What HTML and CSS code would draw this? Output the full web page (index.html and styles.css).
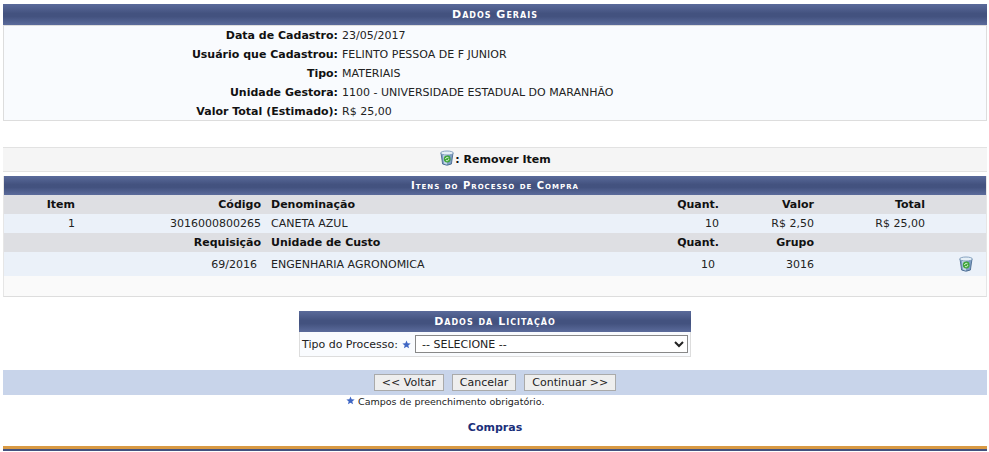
FILE: index.html
```html
<!DOCTYPE html>
<html lang="pt-BR">
<head>
  <meta charset="UTF-8">
  <title>Dados da Licitação</title>
  <link rel="stylesheet" href="styles.css">
</head>
<body>

<svg class="sprites" width="0" height="0">
  <symbol id="lixeira" viewBox="0 0 16 16">
    <path d="M2 3 L3.6 14 Q8 16.4 12.4 14 L14 3 Z" fill="#7f9fc4" stroke="#3d5f86" stroke-width="0.8"/>
    <path d="M4 5 L5 13.6 Q6.5 14.6 8 14.6 L8 5 Z" fill="#c5d8ea"/>
    <ellipse cx="8" cy="3" rx="6.4" ry="2" fill="#e6f0f7" stroke="#6f8fb3" stroke-width="0.8"/>
    <circle cx="8.2" cy="9" r="3.4" fill="#3fa63a"/>
    <path d="M6.6 9 A1.7 1.7 0 0 1 9.6 8 M9.8 9.2 A1.7 1.7 0 0 1 6.9 10.2" fill="none" stroke="#e8f8e0" stroke-width="1"/>
  </symbol>
  <symbol id="estrela" viewBox="0 0 10 10">
    <path d="M5 .5 L6.3 3.6 L9.6 3.8 L7 6 L7.9 9.3 L5 7.5 L2.1 9.3 L3 6 L.4 3.8 L3.7 3.6 Z" fill="#3f66c4"/>
  </symbol>
</svg>

<div class="pagina">

  <table class="formulario dados-gerais">
    <caption>Dados Gerais</caption>
    <tbody>
      <tr><th>Data de Cadastro:</th><td>23/05/2017</td></tr>
      <tr><th>Usuário que Cadastrou:</th><td>FELINTO PESSOA DE F JUNIOR</td></tr>
      <tr><th>Tipo:</th><td>MATERIAIS</td></tr>
      <tr><th>Unidade Gestora:</th><td>1100 - UNIVERSIDADE ESTADUAL DO MARANHÃO</td></tr>
      <tr><th>Valor Total (Estimado):</th><td>R$ 25,00</td></tr>
    </tbody>
  </table>

  <div class="legenda">
    <svg class="icone"><use href="#lixeira"/></svg><b>: Remover Item</b>
  </div>

  <div class="listagem-caixa">
    <h3 class="titulo titulo-menor">Itens do Processo de Compra</h3>
    <table class="listagem">
      <colgroup>
        <col class="c-item"><col class="c-codigo"><col class="c-nome"><col class="c-quant"><col class="c-valor"><col class="c-total"><col>
      </colgroup>
      <tr class="cabeca">
        <th class="dir">Item</th><th class="dir">Código</th><th>Denominação</th>
        <th class="dir">Quant.</th><th class="dir">Valor</th><th class="dir">Total</th><th></th>
      </tr>
      <tr class="linha">
        <td class="dir">1</td><td class="dir">3016000800265</td><td>CANETA AZUL</td>
        <td class="dir">10</td><td class="dir">R$ 2,50</td><td class="dir">R$ 25,00</td><td></td>
      </tr>
      <tr class="cabeca">
        <th></th><th class="dir">Requisição</th><th>Unidade de Custo</th>
        <th class="dir">Quant.</th><th class="dir">Grupo</th><th></th><th></th>
      </tr>
      <tr class="linha linha-alta">
        <td></td><td class="dir recuo">69/2016</td><td>ENGENHARIA AGRONOMICA</td>
        <td class="dir recuo">10</td><td class="dir">3016</td><td></td>
        <td class="acao"><svg class="icone"><use href="#lixeira"/></svg></td>
      </tr>
    </table>
  </div>

  <div class="licitacao">
    <h3 class="titulo">Dados da Licitação</h3>
    <div class="licitacao-corpo">
      <label for="tipo">Tipo do Processo:</label>
      <svg class="estrela"><use href="#estrela"/></svg>
      <select id="tipo"><option>-- SELECIONE --</option></select>
    </div>
  </div>

  <div class="botoes">
    <button>&lt;&lt; Voltar</button>
    <button>Cancelar</button>
    <button>Continuar &gt;&gt;</button>
  </div>

  <p class="obrigatorio"><svg class="estrela"><use href="#estrela"/></svg> Campos de preenchimento obrigatório.</p>

  <a class="voltar" href="#">Compras</a>

  <div class="rodape"></div>
</div>

</body>
</html>
```
FILE: styles.css
```css
* {
  box-sizing: border-box;
}

body {
  margin: 0;
  background-color: white;
  font-family: "DejaVu Sans", Verdana, sans-serif;
  font-size: 11px;
  color: #222;
}

.sprites {
  position: absolute;
}

.pagina {
  padding: 4px 2px 0 3px;
  height: 452px;
  overflow: hidden;
}

table {
  border-collapse: collapse;
  width: 100%;
}

caption,
.titulo {
  margin: 0;
  height: 21px;
  line-height: 21px;
  background: linear-gradient(#5a6a9a, #43527f 45%, #43527f 60%, #5b6b9b);
  color: white;
  font-size: 11px;
  font-weight: bold;
  font-variant: small-caps;
  letter-spacing: 1px;
  text-align: center;
}

.titulo-menor {
  height: 19px;
  line-height: 19px;
  font-size: 10px;
}

.dados-gerais {
  table-layout: fixed;
}

.dados-gerais tbody {
  background-color: #f9fbfe;
  outline: 1px solid #ddd;
  outline-offset: -1px;
}

.dados-gerais th,
.dados-gerais td {
  height: 19px;
  padding: 0 2px;
  font-weight: normal;
}

.dados-gerais th {
  width: 337px;
  text-align: right;
  font-weight: bold;
  color: #111;
}

.dados-gerais td {
  text-align: left;
}

.dados-gerais tr:first-child th,
.dados-gerais tr:first-child td {
  height: 20px;
}

.legenda {
  display: flex;
  justify-content: center;
  align-items: center;
  height: 25px;
  margin-top: 26px;
  background-color: #f5f5f5;
  border-top: 1px solid #e2e2e2;
  border-bottom: 1px solid #e2e2e2;
  color: #111;
}

.icone {
  width: 16px;
  height: 16px;
}

.legenda .icone {
  margin-top: -4px;
}

.listagem-caixa {
  margin-top: 4px;
  height: 121px;
  background-color: #fafafa;
  border-bottom: 1px solid #ddd;
  border-left: 1px solid #e6e6e6;
  border-right: 1px solid #e6e6e6;
}

.listagem {
  table-layout: fixed;
}

.listagem th,
.listagem td {
  padding: 0 5px;
  text-align: left;
}

.listagem .dir {
  text-align: right;
}

.listagem .recuo {
  padding-right: 9px;
}

.c-item { width: 76px; }
.c-codigo { width: 186px; }
.c-nome { width: 394px; }
.c-quant { width: 64px; }
.c-valor { width: 95px; }
.c-total { width: 111px; }

.cabeca {
  height: 19px;
  background-color: #dedfe3;
  color: #111;
}

.linha {
  height: 19px;
  background-color: #ebf1f9;
}

.linha-alta {
  height: 24px;
}

.acao {
  text-align: right !important;
  padding: 0 12px 0 0 !important;
}

.acao .icone {
  display: block;
  margin-left: auto;
}

.licitacao {
  width: 392px;
  margin: 14px auto 0;
}

.licitacao-corpo {
  display: flex;
  align-items: center;
  gap: 4px;
  height: 25px;
  padding: 0 2px;
  background-color: #f9fbfe;
  border: 1px solid #ddd;
  border-top: none;
}

.estrela {
  width: 9px;
  height: 9px;
}

select {
  flex: 1;
  height: 18px;
  padding: 0 0 0 2px;
  background-color: white;
  border: 1px solid #888;
  font-family: inherit;
  font-size: 11px;
  color: #222;
}

.botoes {
  display: flex;
  justify-content: center;
  align-items: center;
  gap: 8px;
  height: 25px;
  margin-top: 13px;
  background-color: #c8d4ea;
}

button {
  height: 17px;
  padding: 0 7px;
  background-color: #eee;
  border: 1px solid #aaa;
  font-family: inherit;
  font-size: 11px;
  color: #222;
}

.obrigatorio {
  margin: 0;
  padding-left: 343px;
  height: 14px;
  line-height: 14px;
  margin-top: 0;
  font-size: 9.5px;
}

.voltar {
  display: block;
  margin-top: 11px;
  height: 16px;
  line-height: 16px;
  text-align: center;
  font-weight: bold;
  color: #1b2f7a;
  text-decoration: none;
}

.rodape {
  height: 5px;
  margin-top: 10px;
  background: linear-gradient(#d99a44 3px, #43527f 3px);
}
```
